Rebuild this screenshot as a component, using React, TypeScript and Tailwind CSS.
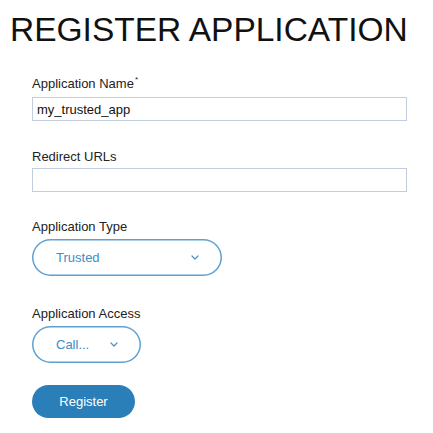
import React from "react";

function Chevron() {
  return (
    <svg width="8" height="5" viewBox="0 0 8 5" fill="none">
      <path d="M1 1l3 3 3-3" stroke="#4a90c6" strokeWidth="1.2" strokeLinecap="round" strokeLinejoin="round" />
    </svg>
  );
}

function Label({ text, required }: { text: string; required?: boolean }) {
  return (
    <div className="text-[13px] leading-4 text-[#222]">
      {text}
      {required && <span className="relative -top-[6px] ml-[1px] text-[8px]">*</span>}
    </div>
  );
}

function Select({ value, width }: { value: string; width: string }) {
  return (
    <div
      className={`mt-1 flex h-[37px] ${width} items-center justify-between rounded-[19px] bg-white pl-[24px] pr-[23px] text-[13px] text-[#3d8dc6] shadow-[inset_0_0_0_1.5px_#5da1d3]`}
    >
      <span>{value}</span>
      <Chevron />
    </div>
  );
}

export default function App() {
  return (
    <div className="h-[433px] w-[433px] bg-white font-['Liberation_Sans',Arial,sans-serif]">
      <h1 className="ml-[10px] pt-[13px] text-[33.5px] leading-[34px] text-[#111]">REGISTER APPLICATION</h1>

      <div className="mt-[29px] flex flex-col pl-[32px] pr-[26px]">
        <Label text="Application Name" required />
        <input
          className="mt-[3px] h-[24px] border border-[#c3cde0] px-[4px] text-[13px] text-[#111] outline-none"
          defaultValue="my_trusted_app"
        />

        <div className="mt-[28px]">
          <Label text="Redirect URLs" />
        </div>
        <input className="mt-[3px] h-[24px] border border-[#c3cde0] px-[4px] text-[13px] outline-none" />

        <div className="mt-[27px]">
          <Label text="Application Type" />
        </div>
        <Select value="Trusted" width="w-[190px]" />

        <div className="mt-[30px]">
          <Label text="Application Access" />
        </div>
        <Select value="Call..." width="w-[109px]" />

        <button className="mt-[22px] h-[33px] w-[103px] rounded-full bg-[#2b7fb9] text-[13px] text-white">
          Register
        </button>
      </div>
    </div>
  );
}
